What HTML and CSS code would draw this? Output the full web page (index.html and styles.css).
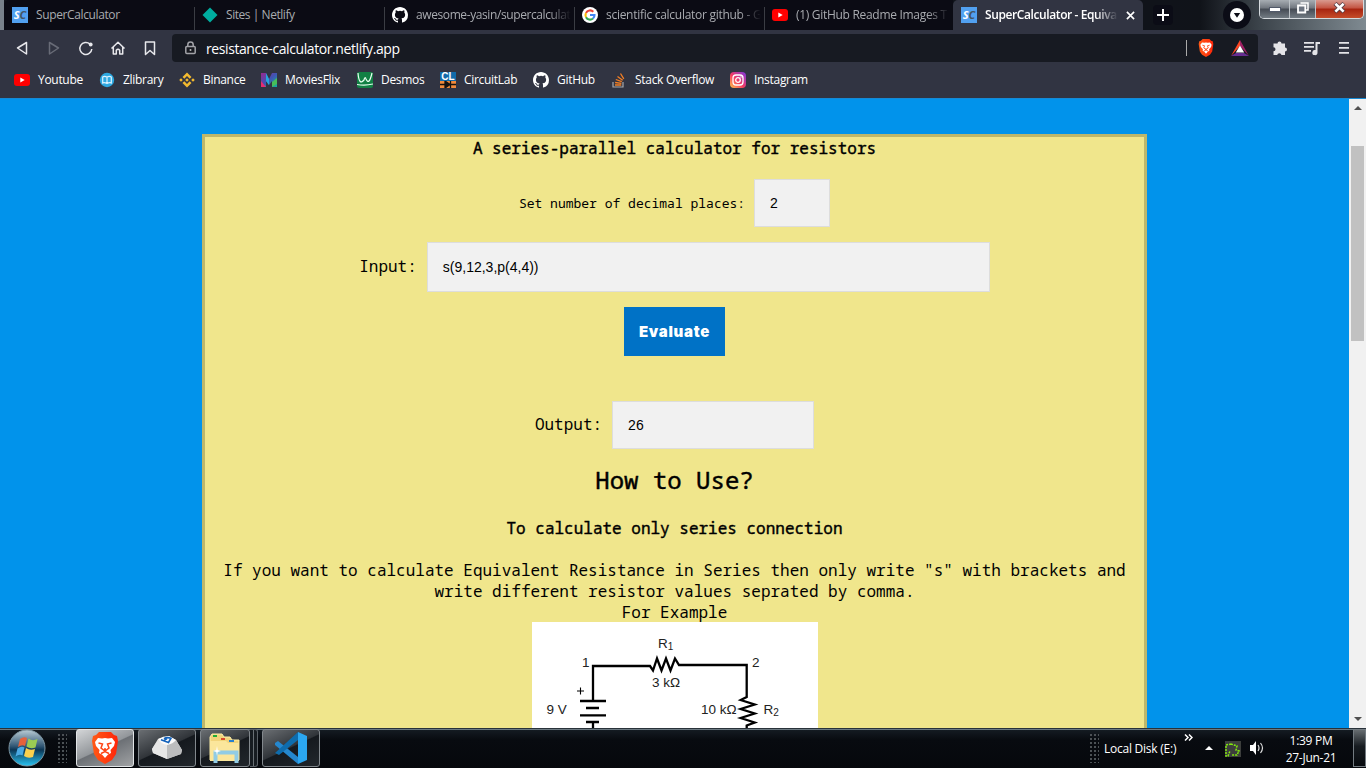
FILE: index.html
```html
<!DOCTYPE html>
<html lang="en">
<head>
<meta charset="utf-8">
<title>SuperCalculator - Equivalent Resistance</title>
<link rel="stylesheet" href="styles.css">
</head>
<body>
<svg class="defs" width="0" height="0" aria-hidden="true">
  <defs>
    <linearGradient id="orb" x2="0" y2="1"><stop stop-color="#b9ccd5"/><stop offset=".45" stop-color="#315775"/><stop offset=".55" stop-color="#0c3655"/><stop offset="1" stop-color="#29c5f4"/></linearGradient>
    <linearGradient id="brave" x2="1"><stop stop-color="#ff5a16"/><stop offset="1" stop-color="#ff2509"/></linearGradient>
    <linearGradient id="insta" x1="0" y1="1" x2="1" y2="0"><stop stop-color="#ffc64b"/><stop offset=".45" stop-color="#f43b62"/><stop offset="1" stop-color="#7b38e2"/></linearGradient>
    <linearGradient id="film" x2="1" y2="1"><stop stop-color="#9b278f"/><stop offset=".5" stop-color="#3f54b4"/><stop offset="1" stop-color="#11b2a1"/></linearGradient>
  </defs>
  <symbol id="gh" viewBox="0 0 16 16"><path fill="#fff" d="M8 0C3.58 0 0 3.58 0 8c0 3.54 2.29 6.53 5.47 7.59.4.07.55-.17.55-.38 0-.19-.01-.82-.01-1.49-2.01.37-2.53-.49-2.69-.94-.09-.23-.48-.94-.82-1.13-.28-.15-.68-.52-.01-.53.63-.01 1.08.58 1.23.82.72 1.21 1.87.87 2.33.66.07-.52.28-.87.51-1.07-1.78-.2-3.64-.89-3.64-3.95 0-.87.31-1.59.82-2.15-.08-.2-.36-1.02.08-2.12 0 0 .67-.21 2.2.82a7.6 7.6 0 0 1 4 0c1.53-1.04 2.2-.82 2.2-.82.44 1.1.16 1.92.08 2.12.51.56.82 1.27.82 2.15 0 3.07-1.87 3.75-3.65 3.95.29.25.54.73.54 1.48 0 1.07-.01 1.93-.01 2.2 0 .21.15.46.55.38A8 8 0 0 0 16 8c0-4.42-3.58-8-8-8z"/></symbol>
  <symbol id="yt" viewBox="0 0 16 16"><rect y="2" width="16" height="12" rx="3" fill="#f00"/><path fill="#fff" d="M6.3 5.5v5l4.4-2.5z"/></symbol>
  <symbol id="lion" viewBox="0 0 26 32"><path fill="url(#brave)" d="M7 0h12l3 3 3 1 1 5-2 13-4 6-7 4-7-4-4-6L0 9l1-5 3-1z"/><path fill="#fff" d="M6 6l4 .6 3-.6 3 .6 4-.6 3 4-1 4-3.500 4 .5 3-3 1.500L13 26l-3-3.500L7 21l.5-3L4 14l-1-4z"/><path fill="none" stroke="#ff4312" stroke-width="1.500" d="M6.500 11l4 1-1.500 4 4 3 4-3-1.500-4 4-1M9 21.500l4-2 4 2M13 19v-3"/></symbol>
</svg>

<header class="tabs">
  <div class="tab"><span class="ico sc"><i>S</i><i>C</i></span><span class="label t1">SuperCalculator</span></div>
  <div class="tab"><svg class="ico" viewBox="0 0 16 16"><path fill="#00ada0" d="M8 .5 15.5 8 8 15.5.5 8z"/></svg><span class="label t2">Sites | Netlify</span></div>
  <div class="tab"><svg class="ico"><use href="#gh"/></svg><span class="label fade t3">awesome-yasin/supercalculat</span></div>
  <div class="tab"><svg class="ico" viewBox="0 0 16 16"><circle cx="8" cy="8" r="8" fill="#fff"/><g fill="none" stroke-width="2.1"><path stroke="#ea4335" d="M4 5.9A4.6 4.6 0 0 1 11.3 4.7"/><path stroke="#fbbc05" d="M4 5.9a4.6 4.6 0 0 0 0 4.3"/><path stroke="#34a853" d="M4 10.2a4.6 4.6 0 0 0 7 1.3"/><path stroke="#4285f4" d="M11 11.5A4.5 4.5 0 0 0 12.5 8H8"/></g></svg><span class="label fade t4">scientific calculator github - G</span></div>
  <div class="tab last"><svg class="ico"><use href="#yt"/></svg><span class="label fade t5">(1) GitHub Readme Images T</span></div>
  <div class="tab active"><span class="ico sc"><i>S</i><i>C</i></span><span class="label fade t6">SuperCalculator - Equiva</span><svg class="close" viewBox="0 0 10 10"><path d="M1 1l8 8M9 1L1 9" stroke="#fff" stroke-width="1.8"/></svg></div>
  <div class="plus"><svg width="12" height="12"><path d="M6 0v12M0 6h12" stroke="#fff" stroke-width="2"/></svg></div>
  <div class="drop"><svg width="14" height="14"><circle cx="7" cy="7" r="7" fill="#fff"/><path d="M3.8 5h6.4L7 9.7z" fill="#0b0c16"/></svg></div>
  <div class="winbtns">
    <div class="wb"><svg width="12" height="6"><rect x=".5" y=".5" width="11" height="4" fill="#fff" stroke="#505868"/></svg></div>
    <div class="wb mid"><svg width="12" height="12"><path d="M3.500 1h7.500v7H8.500" fill="none" stroke="#fff" stroke-width="1.500"/><path d="M1 3.5h7.3v7H1z" fill="#6c7480" stroke="#fff" stroke-width="1.8"/></svg></div>
    <div class="wb red"><svg width="13" height="12"><path d="M2 1.5l9 8.5M11 1.5L2 10" stroke="#5b3f45" stroke-width="4.4"/><path d="M2.4 1.8l8.2 7.8M10.6 1.8L2.4 9.6" stroke="#fff" stroke-width="2.6"/></svg></div>
  </div>
</header>

<nav class="toolbar">
  <svg class="nav" width="166" height="36" fill="none" stroke="#e8e8ec" stroke-width="1.5" stroke-linejoin="round">
    <path d="M26.5 12.5v11.5L17.5 18z"/>
    <path stroke="#686b77" d="M49.5 12.5v11.5l9-6z"/>
    <path d="M90 14.2a6 6 0 1 0 1.8 4.8"/><circle cx="90.7" cy="14.5" r="1.9" fill="#e8e8ec" stroke="none"/>
    <path d="M111.5 18.5 118 12.3l6.5 6.2M113.3 17v7h3v-3.8q1.7-2 3.4 0V24h3v-7"/>
    <path d="M145.5 12h9v12.5l-4.5-4-4.5 4z"/>
  </svg>
  <div class="address">
    <svg class="lock" width="11" height="14"><path d="M2.8 6V3.7a2.7 2.7 0 0 1 5.4 0V6" fill="none" stroke="#a2a3a8" stroke-width="1.5"/><rect x=".8" y="5.5" width="9.4" height="7" rx="1" fill="#17191f" stroke="#a2a3a8" stroke-width="1.5"/><circle cx="5.5" cy="9" r="1" fill="#bbb"/></svg>
    <span class="url">resistance-calculator.netlify.app</span>
    <span class="bar"></span>
    <svg class="shield" width="16" height="18"><use href="#lion"/></svg>
    <svg class="bat" width="18" height="16"><path fill="#ff4724" d="M9 0v6L0 16z"/><path fill="#9e1f63" d="M9 0v6l9 10z"/><path fill="#662d91" d="M0 16h18l-5-3H5z"/><path fill="#fff" d="M9 5.5l4.2 7H4.8z"/></svg>
  </div>
  <svg class="tools" width="78" height="18" fill="#e4e4e8">
    <path d="M1.500 4.500h4a2 2 0 1 1 4 0h3.500v4a2 2 0 1 1 0 4v3.500H9.500a2.200 2.200 0 0 0-4.300 0H1.500v-3.700a2 2 0 0 0 0-4z"/>
    <path d="M32 3h10v1.800H32zM32 7h10v1.800H32zM32 11h7v1.800h-7zM43.500 3H48v2h-2.500v8.500a2.600 2.600 0 1 1-2-2.500z"/>
    <path d="M67 3h10v1.700H67zM67 8h10v1.700H67zM67 13h10v1.700H67z"/>
  </svg>
</nav>

<nav class="bookmarks">
  <div class="bm"><svg class="ico"><use href="#yt"/></svg><span>Youtube</span></div>
  <div class="bm"><svg class="ico" viewBox="0 0 16 16"><circle cx="8" cy="8" r="7.2" fill="#2ea8e0"/><path d="M8 5v7M8 5Q5.500 3.800 3.700 5v6Q5.500 10 8 11.500 10.500 10 12.300 11V5Q10.500 3.800 8 5" fill="none" stroke="#d9f2ff" stroke-width="1.200"/></svg><span>Zlibrary</span></div>
  <div class="bm"><svg class="ico" viewBox="0 0 16 16" fill="#f3ba2f"><path d="M8 .5l4.500 4.500-1.800 1.800L8 4.100 5.300 6.800 3.500 5zM8 15.500l4.500-4.500-1.800-1.800L8 11.900 5.300 9.200 3.500 11zM8 6.200 9.800 8 8 9.800 6.200 8zM2 6.200 3.800 8 2 9.800.2 8zM14 6.200 15.800 8 14 9.800 12.200 8z"/></svg><span>Binance</span></div>
  <div class="bm"><svg class="ico" viewBox="0 0 16 16"><path fill="url(#film)" d="M0 1h5l3 6 3-6h5v14h-5V9l-3 4-3-4v6H0z"/><path fill="#e72d70" d="M0 9l5 6H0z"/><path fill="#25a6dc" d="M5 1l3 6v6L5 9z"/><path fill="#46bd59" d="M11 10l5-4v6l-5 3z"/></svg><span>MoviesFlix</span></div>
  <div class="bm"><svg class="ico" viewBox="0 0 16 16"><rect width="16" height="16" rx="2" fill="#128044"/><path d="M1 1q1 13 6 7 1-4 2-1 3 7 6-6M0 12.500q8 1.500 16-.5" fill="none" stroke="#e6ffef" stroke-width="1.200"/></svg><span>Desmos</span></div>
  <div class="bm"><span class="ico cl"><b>CL</b><svg width="16" height="7"><path d="M0 3.500h16M5 0v7l5-3.500zM10.500 0v7" stroke="#171310" fill="#171310" stroke-width="1.300"/></svg></span><span>CircuitLab</span></div>
  <div class="bm"><svg class="ico"><use href="#gh"/></svg><span>GitHub</span></div>
  <div class="bm"><svg class="ico so" viewBox="0 0 16 16" fill="none"><path d="M2 10v5h10v-5" stroke="#a7a9ac" stroke-width="1.200"/><path d="M4 13h6.300M4.100 10.500l6.300.8M4.800 7.500l6 2.200M6.500 4.500l5.200 3.800M9.500 1.500l3.300 5.400" stroke="#f47f24" stroke-width="1.300"/></svg><span>Stack Overflow</span></div>
  <div class="bm"><svg class="ico" viewBox="0 0 16 16"><rect width="16" height="16" rx="4" fill="url(#insta)"/><rect x="3" y="3" width="10" height="10" rx="3" fill="none" stroke="#fff" stroke-width="1.300"/><circle cx="8" cy="8" r="2.300" fill="none" stroke="#fff" stroke-width="1.300"/><circle cx="11" cy="5" r=".7" fill="#fff"/></svg><span>Instagram</span></div>
</nav>

<div class="viewport">
  <main class="page">
    <section class="card">
      <h4 class="title">A series-parallel calculator for resistors</h4>
      <div class="row places"><label>Set number of decimal places:</label><div class="field">2</div></div>
      <div class="row input"><label>Input:</label><div class="field">s(9,12,3,p(4,4))</div></div>
      <div class="button">Evaluate</div>
      <div class="row output"><label>Output:</label><div class="field">26</div></div>
      <h2>How to Use?</h2>
      <h4 class="sub">To calculate only series connection</h4>
      <p>If you want to calculate Equivalent Resistance in Series then only write "s" with brackets and<br>write different resistor values seprated by comma.<br>For Example</p>
      <svg class="circuit" width="286" height="106">
        <g fill="none" stroke="#000" stroke-width="2.300">
          <path d="M61 79V44h57l3 4.500 4-12 4.500 12 4.500-12 4.500 12 4.500-12 4 6.500h67.700V75l-6 3 14 4.500-14 4.500 14 4.500-14 4.500 14 4.500-8 3v4"/>
          <path d="M48 79h26M54 86h13M48 93.300h26M54 100h13M61 100v6"/>
          <path d="M45 69h7M48.500 65.500v7" stroke-width="1.100"/>
        </g>
        <g class="ct"><text x="126" y="25.500">R<tspan dy="2" font-size="10">1</tspan></text><text x="50" y="45">1</text><text x="220" y="45">2</text><text x="120" y="65">3 kΩ</text><text x="14.500" y="92">9 V</text><text x="169" y="92">10 kΩ</text><text x="231.500" y="92">R<tspan dy="2" font-size="10">2</tspan></text></g>
      </svg>
    </section>
  </main>
  <aside class="scroll"><i class="up"></i><i class="thumb"></i><i class="down"></i></aside>
</div>

<footer class="taskbar">
  <svg class="orb" width="38" height="38"><circle cx="19" cy="19" r="18" fill="url(#orb)" stroke="#7d95a1"/><path fill="#e5623c" d="M12 10q4-3 7-1l-2 8q-3-2-7 1z"/><path fill="#9acb53" d="M20.500 9.500q4 3 9 .5l-2 8.500q-5 2-9-1z"/><path fill="#4aa9e3" d="M9.500 19.500q4-3 7-1l-2 8q-3-2-7 1z"/><path fill="#fbd04d" d="M18 19q4 3 9 1l-2 8q-5 2-9-1z"/></svg>
  <i class="grip"></i>
  <div class="task on"><svg width="26" height="32"><use href="#lion"/></svg></div>
  <div class="task"><svg width="30" height="24"><path fill="#d6d6d6" d="M0 13 6 3 17 0l7 4 6 10-1 4-14 5L1 17z"/><path fill="#e6e6e6" d="M0 13 6 4l9 5v14L1 17z"/><path fill="#bcbdbe" d="M15 9l9-5 6 10-1 4-14 5z"/><path fill="#fafafa" d="M6 3q5-3 11-3l7 4q-3 4-9 5Q9 8 6 3z"/><path d="M9 3.800l7.500 2.700L19 2.300q-4-1.500-7 .5M12 4.800l3-2.500" fill="none" stroke="#1261bb" stroke-width="1.700"/></svg></div>
  <div class="task folder"><svg width="34" height="32"><path fill="#f2d47a" stroke="#fff0a9" d="M2 5l2-3h10l2 3h6l2 3h7v20H2z"/><path fill="#fbe69b" d="M2 9h16l2 2h11v18H2z"/><path fill="#22ad36" d="M5 3h4v2H5z"/><path fill="#d9492b" d="M13 6h4v2h-4z"/><path fill="#2880cf" d="M21 8h5v2h-5z"/><path d="M7.500 31V20.500h21V31" fill="none" stroke="#91cce5" stroke-width="4"/><path fill="#fff" d="M9 14l.7 4 3.300 1-3.300 1L9 24l-.7-4L5 19l3.300-1z"/></svg></div>
  <div class="stack"></div>
  <div class="task code"><svg width="32" height="32"><path fill="#2587ce" d="M0 11l3-2 20 16v7L0 13z"/><path fill="#0e6cad" d="M0 21 23 0v8L4 23z"/><path fill="#2ba7f1" d="M23 0l9 4v24l-9 4z"/></svg></div>
  <i class="grip right"></i>
  <span class="disk">Local Disk (E:)</span>
  <svg class="chev" width="9" height="7"><path d="M1 .5l3 3-3 3M5 .5l3 3-3 3" fill="none" stroke="#fff" stroke-width="1.500"/></svg>
  <i class="tri"></i>
  <svg class="monitor" width="16" height="16"><path fill="#3c3e3c" d="M0 0h16v16H0z"/><path d="M6 3 1 4v11h2l2-5M6 3l6 2-1 4 3 1-2 4H7" fill="none" stroke="#82e90e" stroke-width="1.500" stroke-dasharray="2 1"/></svg>
  <svg class="sound" width="14" height="14"><path fill="#fff" d="M0 4h3l3-4v14l-3-4H0z"/><path d="M8 4q2 3 0 6M10.500 2q4 5 0 10" fill="none" stroke="#ddd" stroke-width="1.200"/></svg>
  <div class="clock"><span>1:39 PM</span><span class="date">27-Jun-21</span></div>
  <div class="desk"></div>
</footer>
</body>
</html>
```
FILE: styles.css
```css
* { box-sizing: border-box; }
body { margin: 0; width: 1366px; height: 768px; overflow: hidden; display: flex; flex-direction: column; font: 12px "Segoe UI", "Open Sans", "Noto Sans", sans-serif; }
svg { display: block; flex: none; }
.defs { position: absolute; }
.ico { width: 16px; height: 16px; flex: none; }

.tabs { height: 30px; flex: none; display: flex; padding-left: 4px; background: linear-gradient(90deg, #78818a 0 4px, #10131a 4px 1170px, #101319 1200px, #3c444b 1260px, #7f8a91 1366px); }
.tab { width: 190px; height: 30px; padding: 0 4px 0 8px; display: flex; align-items: center; gap: 8px; background: linear-gradient(90deg, transparent 189px, #3b3d44 189px) 0 7px no-repeat, #0b0b14; color: #a9abb0; flex: none; }
.tab:first-child { width: 191px; background-position: 1px 7px; border-radius: 5px 0 0; }
.tab + .tab { padding-left: 7px; }
.tab.last { width: 188px; background: #0b0b14; }
.tab.active { background: #313442; color: #fff; font-weight: 600; border-radius: 5px 5px 0 0; padding: 0 8px; }
.label { flex: 1; min-width: 0; white-space: nowrap; overflow: hidden; line-height: 20px; }
.fade { -webkit-mask-image: linear-gradient(90deg, #000 calc(100% - 22px), transparent); mask-image: linear-gradient(90deg, #000 calc(100% - 22px), transparent); }
.t1 { letter-spacing: -.38px; }
.t2 { letter-spacing: -.45px; }
.t3 { letter-spacing: -.4px; }
.t4 { letter-spacing: -.28px; }
.t5 { letter-spacing: -.3px; }
.t6 { letter-spacing: -.4px; }
.sc { background: #51a0f0; display: flex; justify-content: center; align-items: center; font: italic bold 11px/16px "Open Sans", sans-serif; color: #fff; }
.sc i + i { color: #455362; }
.close { width: 9px; height: 9px; }
.plus { width: 20px; height: 20px; margin: 5px 0 0 10px; border-radius: 4px; background: #0b0c16; display: grid; place-items: center; }
.drop { width: 28px; height: 28px; margin: 1px 0 0 50px; border-radius: 50%; background: #0b0c16; display: grid; place-items: center; }
.winbtns { height: 19px; width: 105px; margin-left: 8px; display: flex; border: 1px solid #d5dade; border-top: 0; border-radius: 0 0 5px 5px; overflow: hidden; }
.wb { width: 29px; display: grid; place-items: center; padding-bottom: 2px; background: linear-gradient(#a7adb3, #70767e 45%, #454b54 50%, #727b83); }
.wb:first-child { padding: 2px 0 0; }
.mid { width: 27px; border: solid #bcc2c7; border-width: 0 1px; }
.red { flex: 1; background: linear-gradient(#d99a8f, #c35341 45%, #a72410 50%, #c54c2a); }

.toolbar { height: 36px; flex: none; display: flex; align-items: center; background: #313442; }
.nav { margin-right: 6px; }
.address { width: 1086px; height: 28px; background: #171a22; border-radius: 4px; display: flex; align-items: center; padding-left: 13px; }
.url { margin-left: 10px; width: 980px; font-size: 14px; letter-spacing: -.41px; color: #fff; }
.bar { width: 1px; height: 16px; background: #aaa; }
.shield { margin-left: 11px; }
.bat { margin-left: 17px; }
.tools { margin-left: 14px; }

.bookmarks { height: 33px; flex: none; padding: 0 0 5px 14px; background: #313442; border-bottom: 1px solid #1689d4; display: grid; align-items: center; grid-template-columns: 85px 80px 82px 96px 83px 93px 78px 119px 80px; color: #fff; }
.bm { display: flex; align-items: center; gap: 8px; white-space: nowrap; letter-spacing: -.3px; }
.cl { background: linear-gradient(#126aa9 9px, #f18a3b 9px); }
.cl b { display: block; font: bold 10px/9px "Liberation Sans", sans-serif; color: #fff; letter-spacing: 0; text-align: center; }

.viewport { height: 629px; flex: none; display: flex; overflow: hidden; }
.page { width: 1349px; background: #0193eb; padding: 35px 0 0 202px; }
.card { width: 945px; height: 700px; background: #f0e68c; border: 3px solid #bdb76b; display: flex; flex-direction: column; align-items: center; font: 16px/21px "Noto Sans Mono", "Droid Sans Mono", "DejaVu Sans Mono", monospace; color: #000; }
h2, h4, p { margin: 0; font-weight: 400; white-space: nowrap; text-align: center; }
h4 { font-size: 16px; line-height: 22px; -webkit-text-stroke: .4px #000; }
h2 { font-size: 24px; line-height: 32px; -webkit-text-stroke: .45px #000; margin-top: 15px; }
.row { display: flex; align-items: center; }
.field { background: #f1f1f1; border: 1px solid #ddd; display: flex; align-items: center; font: 14px "Liberation Sans", Arial, sans-serif; }
.places { margin-top: 20px; gap: 9px; font-size: 13px; }
.places .field { width: 76px; height: 48px; padding: 0 0 0 15px; }
.input { margin-top: 15px; gap: 10px; }
.input .field { width: 563px; height: 50px; padding-left: 15px; }
.input label, .output label { padding-bottom: 2px; }
.button { width: 101px; height: 49px; margin-top: 15px; display: grid; place-items: center; background: #0072c6; color: #fff; font: 900 15px Inter, "Liberation Sans", sans-serif; letter-spacing: .7px; }
.output { margin-top: 45px; gap: 10px; }
.output .field { width: 202px; height: 48px; padding-left: 15px; }
.sub { margin: 21px 0; }
.circuit { background: #fff; margin-top: -1px; }
.ct { font: 13.5px "Liberation Sans", Arial, sans-serif; fill: #222; }
.scroll { width: 17px; background: #f1f1f1; display: flex; flex-direction: column; align-items: center; }
.up { margin-top: 7px; border: 4px solid transparent; border-top: 0; border-bottom: 4px solid #505050; }
.thumb { margin-top: 36px; width: 13px; height: 195px; background: #c1c1c1; }
.down { margin-top: 376px; border: 4px solid transparent; border-bottom: 0; border-top: 4px solid #505050; }

.taskbar { height: 40px; flex: none; display: flex; align-items: center; padding-left: 8px; color: #fff; background: linear-gradient(#29323a 0 1px, #6b7981 1px 2px, #141b22 2px, #080b10 12px, #06080c); }
.grip { width: 10px; height: 30px; margin: 0 9px 0 11px; background: radial-gradient(circle, #50565a 0 .7px, transparent .8px) 0 0 / 4px 4px; }
.task { width: 58px; height: 38px; margin-right: 4px; border: 1px solid #82888d; border-radius: 3px; display: grid; place-items: center; background: linear-gradient(155deg, #6a6e72, #303439 48%, #15191e 50%, #22272c); }
.on { border-color: #e1e4e6; background: linear-gradient(155deg, #d3d5d7, #92969a 48%, #6c7075 50%, #a0a2a4); }
.folder { width: 50px; margin-right: 0; }
.stack { width: 8px; height: 38px; margin-right: 4px; border: solid #5c6268; border-width: 1px 1px 1px 0; background: linear-gradient(90deg, #171c21 3px, #697075 3px 4px, #171c21 4px); border-radius: 0 3px 3px 0; }
.right { margin: 0 5px 0 765px; }
.disk { width: 80px; white-space: nowrap; letter-spacing: -.24px; }
.chev { margin-bottom: 22px; }
.tri { border: 4px solid transparent; border-top: 0; border-bottom: 4px solid #fff; margin-left: 12px; }
.monitor { margin: 2px 0 0 12px; }
.sound { margin-left: 9px; }
.clock { width: 94px; margin-top: 1px; display: flex; flex-direction: column; align-items: center; line-height: 17px; letter-spacing: -.28px; }
.desk { width: 13px; height: 38px; margin-left: -5px; border: 1px solid #737b81; background: linear-gradient(#666c70, #171c21 45%, #080b0f); }
```
